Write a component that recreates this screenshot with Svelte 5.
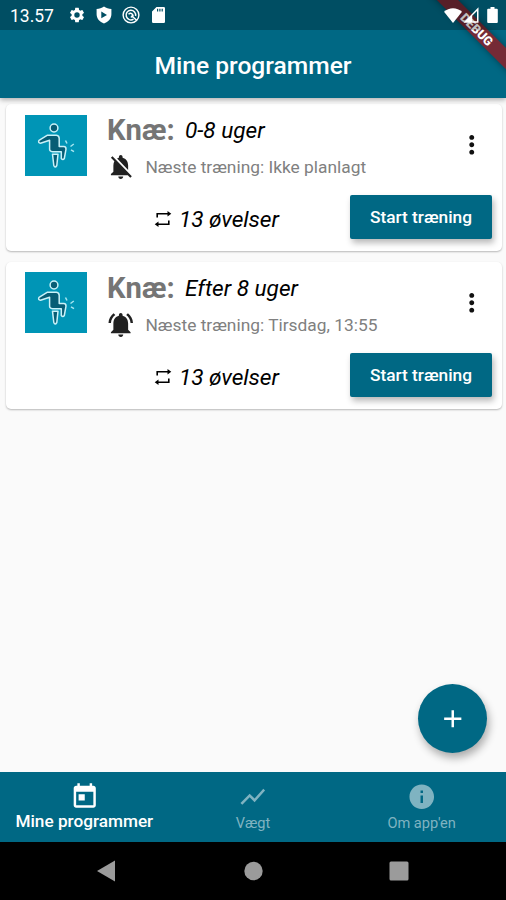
<script>
    const programs = [
        { name: 'Knæ:', period: '0-8 uger', next: 'Ikke planlagt', reminder: false, count: 13 },
        { name: 'Knæ:', period: 'Efter 8 uger', next: 'Tirsdag, 13:55', reminder: true, count: 13 }
    ];

    // Material icon paths, 24x24
    const icons = {
        gear: 'M19.14 12.94c.04-.3.06-.61.06-.94 0-.32-.02-.64-.07-.94l2.03-1.58a.49.49 0 0 0 .12-.61l-1.92-3.32a.49.49 0 0 0-.59-.22l-2.39.96c-.5-.38-1.03-.7-1.62-.94l-.36-2.54a.48.48 0 0 0-.48-.41h-3.84c-.24 0-.43.17-.47.41l-.36 2.54c-.59.24-1.13.57-1.62.94l-2.39-.96c-.22-.08-.47 0-.59.22L2.74 8.87c-.12.21-.08.47.12.61l2.03 1.58c-.05.3-.09.63-.09.94s.02.64.07.94l-2.03 1.58a.49.49 0 0 0-.12.61l1.92 3.32c.12.22.37.29.59.22l2.39-.96c.5.38 1.03.7 1.62.94l.36 2.54c.05.24.24.41.48.41h3.84c.24 0 .44-.17.47-.41l.36-2.54c.59-.24 1.13-.56 1.62-.94l2.39.96c.22.08.47 0 .59-.22l1.92-3.32c.12-.22.07-.47-.12-.61l-2.01-1.58zM12 15.6A3.6 3.6 0 1 1 12 8.4a3.6 3.6 0 0 1 0 7.2z',
        bell: 'M7.58 4.08L6.15 2.65C3.75 4.48 2.17 7.3 2.03 10.5h2c.15-2.65 1.51-4.97 3.55-6.42zm12.39 6.42h2c-.15-3.2-1.73-6.02-4.12-7.85l-1.42 1.43c2.02 1.45 3.39 3.77 3.54 6.42zM18 11c0-3.07-1.64-5.64-4.5-6.32V4c0-.83-.67-1.5-1.5-1.5s-1.5.67-1.5 1.5v.68C7.63 5.36 6 7.92 6 11v5l-2 2v1h16v-1l-2-2v-5zm-6 11c.14 0 .27-.01.4-.04.65-.14 1.18-.58 1.44-1.18.1-.24.15-.5.15-.78h-4c.01 1.1.9 2 2.01 2z',
        bellOff: 'M20 18.69L7.84 6.14 5.27 3.49 4 4.76l2.8 2.8v.01c-.52.99-.8 2.16-.8 3.42v5l-2 2v1h13.73l2 2L21 19.72l-1-1.03zM12 22c1.11 0 2-.89 2-2h-4c0 1.11.89 2 2 2zm6-7.32V11c0-3.08-1.64-5.64-4.5-6.32V4c0-.83-.67-1.5-1.5-1.5s-1.5.67-1.5 1.5v.68c-.15.03-.29.08-.42.12-.1.03-.2.07-.3.11h-.01c-.01 0-.01 0-.02.01-.23.09-.46.2-.68.31 0 0-.01 0-.01.01L18 14.68z',
        more: 'M12 8c1.1 0 2-.9 2-2s-.9-2-2-2-2 .9-2 2 .9 2 2 2zm0 2c-1.1 0-2 .9-2 2s.9 2 2 2 2-.9 2-2-.9-2-2-2zm0 6c-1.1 0-2 .9-2 2s.9 2 2 2 2-.9 2-2-.9-2-2-2z',
        today: 'M19 3h-1V1h-2v2H8V1H6v2H5c-1.11 0-1.99.9-1.99 2L3 19c0 1.1.89 2 2 2h14c1.1 0 2-.9 2-2V5c0-1.1-.9-2-2-2zm0 16H5V8h14v11zM7 10h5v5H7z',
        chart: 'M3.5 18.49l6-6.01 4 4L22 6.92l-1.41-1.41-7.09 7.97-4-4L2 16.99z',
        info: 'M12 2C6.48 2 2 6.48 2 12s4.48 10 10 10 10-4.48 10-10S17.52 2 12 2zm1 15h-2v-6h2v6zm0-8h-2V7h2v2z',
        plus: 'M19 13h-6v6h-2v-6H5v-2h6V5h2v6h6v2z'
    };

    const tabs = [
        { label: 'Mine programmer', icon: icons.today },
        { label: 'Vægt', icon: icons.chart },
        { label: "Om app'en", icon: icons.info }
    ];
    let active = $state(0);
</script>

<div class="screen">
    <div class="ribbon">DEBUG</div>

    <div class="status">
        <span class="clock">13.57</span>
        <svg class="gear" viewBox="0 0 24 24"><path d={icons.gear} /></svg>
        <svg class="shield" viewBox="0 0 16 18">
            <path fill-rule="evenodd" d="M8 .5C5.8 2.2 3.3 2.8.6 2.9v5.3c0 4.5 3.1 7.5 7.4 9.3 4.3-1.8 7.4-4.8 7.4-9.3V2.9C12.7 2.8 10.2 2.2 8 .5zM5.3 5.6v6.6L11 8.900z" />
        </svg>
        <svg class="radar" viewBox="0 0 18 18">
            <g fill="none" stroke="#fff">
                <circle cx="9" cy="9" r="7.9" stroke-width="1.4" />
                <path d="M11.500 13.100A4.800 4.800 0 1 1 13.600 10" stroke-width="1.500" />
                <path d="M6.500 8.300q2.300-2 4 .2t-1.800 2.500M9.500 9.500l5.300 5" stroke-width="1.500" />
            </g>
        </svg>
        <svg class="sd" viewBox="0 0 13 16">
            <path fill-rule="evenodd" d="M4.500 0h7.300Q13 0 13 1.200v13.600q0 1.200-1.200 1.200H1.200Q0 16 0 14.800V4.600zM5 1.800v2.600h1.200V1.800zM7.300 1.800v2.600h1.200V1.800zM9.600 1.800v2.600h1.200V1.800z" />
        </svg>
        <span class="spacer"></span>
        <svg class="wifi" viewBox="0 0 18 15"><path d="M9 15L0 3.800C5-1.100 13-1.100 18 3.800z" /></svg>
        <svg class="signal" viewBox="0 0 16 16">
            <path fill-rule="evenodd" d="M15.500.3v15.400H.5zM14 3.900L9.200 8.700v5.500H14z" />
        </svg>
        <svg class="battery" viewBox="0 0 11 16">
            <path d="M3.500 0h4v1.800h2.300q1 0 1 1V15q0 1-1 1H1.200q-1 0-1-1V2.800q0-1 1-1h2.300z" />
        </svg>
    </div>

    <header>
        <h1>Mine programmer</h1>
    </header>

    <main>
        {#each programs as program}
            <section class="card">
                <svg class="thumb" viewBox="0 0 62 61">
                    <rect width="62" height="61" fill="#0095b6" />
                    <circle class="figure" cx="29" cy="13" r="3.900" />
                    <path class="figure" d="M14 25.300L22.500 20.200H31.500Q34.200 20.500 34.200 23.500V31.500H38.800Q41.200 31.700 41 34.200L39.300 43.500Q38 45.500 36.300 43.500L36.300 36.800H27.500Q24.300 36.500 24.600 33.500V25.200L15.500 28.200Q12.800 28 14 25.300z" />
                    <path class="figure" d="M27.500 39.200H33L31.800 50.500Q30 53.500 28.800 50.500z" />
                    <path class="pain" d="M40.500 25.500l1.500 3M45.500 31.500l3.300-2.500M46 34.800l3 1.800" />
                </svg>

                <div class="info">
                    <div class="heading">
                        <h2>{program.name}</h2>
                        <em>{program.period}</em>
                    </div>
                    <div class="next">
                        <svg viewBox="0 0 24 24"><path d={program.reminder ? icons.bell : icons.bellOff} /></svg>
                        <span>Næste træning: {program.next}</span>
                    </div>
                </div>

                <button class="more" aria-label="Mere">
                    <svg viewBox="0 0 24 24"><path d={icons.more} /></svg>
                </button>

                <div class="actions">
                    <svg viewBox="0 0 18 18">
                        <path class="loop" d="M3.200 7.500V3.800H14.500M14.800 10.500V14.200H3.500" />
                        <path d="M13.500 1L17.300 3.800 13.500 6.600zM4.500 11.400L.7 14.200 4.500 17z" />
                    </svg>
                    <em>{program.count} øvelser</em>
                    <button class="start">Start træning</button>
                </div>
            </section>
        {/each}

        <button class="fab" aria-label="Tilføj">
            <svg viewBox="0 0 24 24"><path d={icons.plus} /></svg>
        </button>
    </main>

    <nav>
        {#each tabs as tab, i}
            <button class:active={active === i} onclick={() => (active = i)}>
                <svg viewBox="0 0 24 24"><path d={tab.icon} /></svg>
                <span>{tab.label}</span>
            </button>
        {/each}
    </nav>

    <div class="system">
        <svg viewBox="0 0 20 22"><path d="M18 .5v21L0 11z" /></svg>
        <svg viewBox="0 0 20 22"><circle cx="10.500" cy="11" r="9.200" /></svg>
        <svg viewBox="0 0 20 22"><rect x=".5" y="1.500" width="19" height="19" rx="1.500" /></svg>
    </div>
</div>

<style>
    :global(body) {
        margin: 0;
    }

    .screen {
        position: relative;
        display: flex;
        flex-direction: column;
        width: 506px;
        height: 900px;
        overflow: hidden;
        background: #fafafa;
        font-family: Roboto, sans-serif;
    }

    svg {
        display: block;
        flex: none;
        fill: currentColor;
    }

    button {
        padding: 0;
        border: none;
        background: none;
        font-family: inherit;
        cursor: pointer;
    }

    /* debug banner lies across the top right corner */
    .ribbon {
        position: absolute;
        z-index: 2;
        left: 416.7px;
        top: 21.9px;
        width: 120px;
        height: 14.8px;
        transform: rotate(45deg);
        background: #752a36;
        box-shadow: 0 0 7px rgba(0, 0, 0, 0.4);
        color: #fff;
        font-size: 12.5px;
        font-weight: 900;
        line-height: 15px;
        text-align: center;
    }

    .status {
        position: relative;
        z-index: 3;
        display: flex;
        align-items: center;
        box-sizing: border-box;
        height: 30px;
        padding: 0 8px 0 10px;
        background: rgba(0, 0, 0, 0.25);
        color: #fff;
    }

    .clock {
        width: 58px;
        font-size: 17.5px;
        margin-top: 2px;
    }

    .gear {
        width: 18px;
        height: 18px;
    }

    .shield {
        width: 16px;
        height: 18px;
        margin-left: 10px;
    }

    .radar {
        width: 18px;
        height: 18px;
        margin-left: 10px;
    }

    .sd {
        width: 13px;
        height: 16px;
        margin-left: 12px;
    }

    .spacer {
        flex: 1;
    }

    .wifi {
        width: 18px;
        height: 15px;
    }

    .signal {
        width: 16px;
        height: 16px;
        margin: 0 8px 0 1px;
    }

    .battery {
        width: 11px;
        height: 16px;
    }

    header {
        position: relative;
        z-index: 1;
        display: flex;
        align-items: center;
        justify-content: center;
        height: 98px;
        margin-top: -30px;
        padding-top: 30px;
        box-sizing: border-box;
        background: #006884;
        box-shadow: 0 2px 5px rgba(0, 0, 0, 0.3);
        color: #fff;
    }

    h1 {
        margin: 3px 0 0;
        font-size: 24.6px;
        font-weight: 500;
    }

    main {
        position: relative;
        flex: 1;
        display: flex;
        flex-direction: column;
        gap: 10.5px;
        padding: 6px 4px 0 6px;
    }

    .card {
        display: grid;
        grid-template-columns: 82px 1fr 60px;
        grid-template-rows: 80px 1fr;
        height: 147px;
        padding-left: 19px;
        box-sizing: border-box;
        border-radius: 5px;
        background: #fff;
        box-shadow: 0 1px 2px rgba(0, 0, 0, 0.27);
    }

    .thumb {
        width: 62px;
        height: 61px;
        margin-top: 10.5px;
    }

    .figure {
        fill: #075d75;
        stroke: #c9f1f8;
        stroke-width: 1.5;
        stroke-linejoin: round;
    }

    .pain {
        fill: none;
        stroke: #a5e5f0;
        stroke-width: 1.5;
    }

    .heading {
        display: flex;
        align-items: baseline;
        height: 36px;
        margin-top: 9px;
    }

    h2 {
        width: 78px;
        margin: 0;
        color: #757575;
        font-size: 29.2px;
        font-weight: 700;
    }

    em {
        font-size: 22.6px;
        font-weight: 400;
        color: #000;
    }

    .heading em {
        position: relative;
        top: -2px;
    }

    .next {
        display: flex;
        align-items: center;
        height: 36px;
        color: #212121;
    }

    .next svg {
        width: 29.5px;
        height: 29.5px;
        margin-left: -1px;
    }

    .next span {
        margin-left: 10px;
        color: #808080;
        font-size: 17.35px;
        white-space: nowrap;
    }

    .more {
        color: #111;
        align-self: center;
        justify-self: center;
        margin-top: 2px;
    }

    .more svg {
        width: 29.5px;
        height: 29.5px;
    }

    .actions {
        grid-column: 1 / -1;
        display: flex;
        align-items: center;
        padding: 0 10px 0 129px;
        height: 66px;
    }

    .actions svg {
        width: 18px;
        height: 18px;
        margin-top: 4px;
    }

    .loop {
        fill: none;
        stroke: currentColor;
        stroke-width: 1.6;
    }

    .actions em {
        flex: 1;
        margin: 5px 0 0 7px;
        font-size: 22.7px;
        letter-spacing: -0.1px;
    }

    .start {
        width: 142px;
        height: 44px;
        border-radius: 2px;
        background: #006884;
        box-shadow: 2px 4px 6px rgba(0, 0, 0, 0.28);
        color: #fff;
        font-size: 17.3px;
        font-weight: 500;
    }

    /* floats over the list */
    .fab {
        position: absolute;
        right: 19px;
        bottom: 19px;
        display: flex;
        align-items: center;
        justify-content: center;
        width: 69px;
        height: 69px;
        border-radius: 50%;
        background: #006884;
        box-shadow: 2px 5px 8px rgba(0, 0, 0, 0.32);
        color: #fff;
    }

    .fab svg {
        width: 29.5px;
        height: 29.5px;
    }

    nav {
        display: grid;
        grid-template-columns: repeat(3, 1fr);
        height: 70px;
        background: #006884;
    }

    nav button {
        display: flex;
        flex-direction: column;
        align-items: center;
        padding-top: 10px;
        color: #7fb3c1;
        font-size: 14.6px;
    }

    nav button span {
        margin-top: 2px;
    }

    nav button.active {
        color: #fff;
        font-size: 17.2px;
        font-weight: 500;
    }

    nav button.active span {
        margin-top: -1px;
    }

    nav svg {
        width: 29.5px;
        height: 29.5px;
    }

    .system {
        display: flex;
        align-items: center;
        justify-content: center;
        gap: 126px;
        height: 58px;
        background: #000;
        color: #9b9b9b;
    }

    .system svg {
        width: 20px;
        height: 22px;
    }
</style>
